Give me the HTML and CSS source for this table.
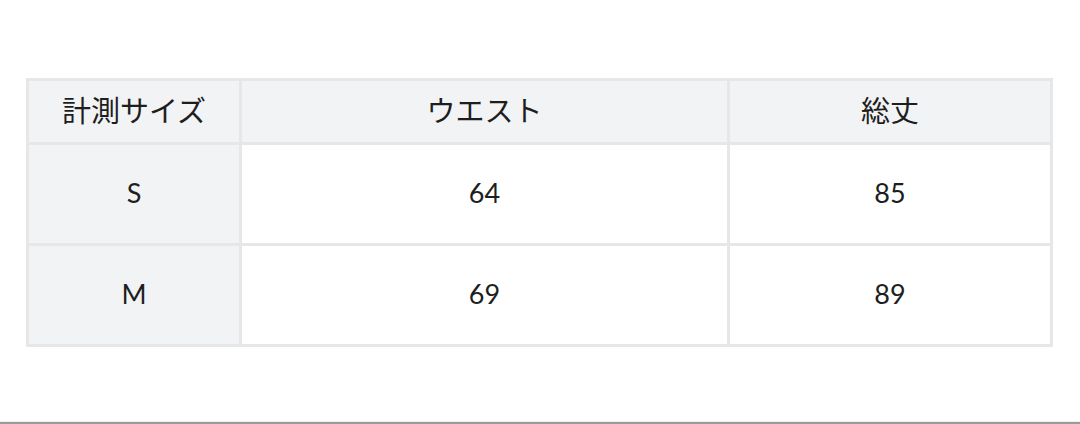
FILE: index.html
```html
<!DOCTYPE html>
<html lang="ja">
<head>
<meta charset="utf-8">
<link rel="stylesheet" href="styles.css">
</head>
<body>
<div class="page">
  <table class="size-table">
    <colgroup>
      <col class="c1"><col class="c2"><col class="c3">
    </colgroup>
    <thead>
      <tr class="head-row"><th>計測サイズ</th><th>ウエスト</th><th>総丈</th></tr>
    </thead>
    <tbody>
      <tr class="body-row"><th>S</th><td>64</td><td>85</td></tr>
      <tr class="body-row"><th>M</th><td>69</td><td>89</td></tr>
    </tbody>
  </table>
</div>
<div class="bottom-rule"></div>
</body>
</html>
```
FILE: styles.css
```css
html, body {
  margin: 0;
  padding: 0;
  background: #fff;
}
body {
  width: 1080px;
  height: 424px;
  overflow: hidden;
  display: flex;
  flex-direction: column;
  font-family: Lato, "Noto Sans CJK JP", sans-serif;
  color: #1e1e1e;
}
.page {
  flex: 1;
  padding: 78px 0 0 26px;
}
.size-table {
  border-collapse: collapse;
  table-layout: fixed;
  width: 1024px;
  border: 3px solid #e7e7e7;
}
.c1 { width: 213px; }
.c2 { width: 488px; }
.c3 { width: 323px; }
.size-table th,
.size-table td {
  border: 3px solid #e7e7e7;
  text-align: center;
  vertical-align: middle;
  font-size: 27px;
  font-weight: 400;
  padding: 0 0 3px;
}
.head-row { height: 64px; }
.head-row th {
  background: #f2f3f5;
  font-family: "Noto Sans CJK JP", sans-serif;
  font-size: 29px;
  padding-bottom: 6px;
}
.body-row { height: 101px; }
.body-row th { background: #f2f3f5; }
.body-row td { background: #fff; }
.bottom-rule {
  height: 2px;
  border-top: 1px solid #eeeeee;
  background: #9a9a9a;
}
```
